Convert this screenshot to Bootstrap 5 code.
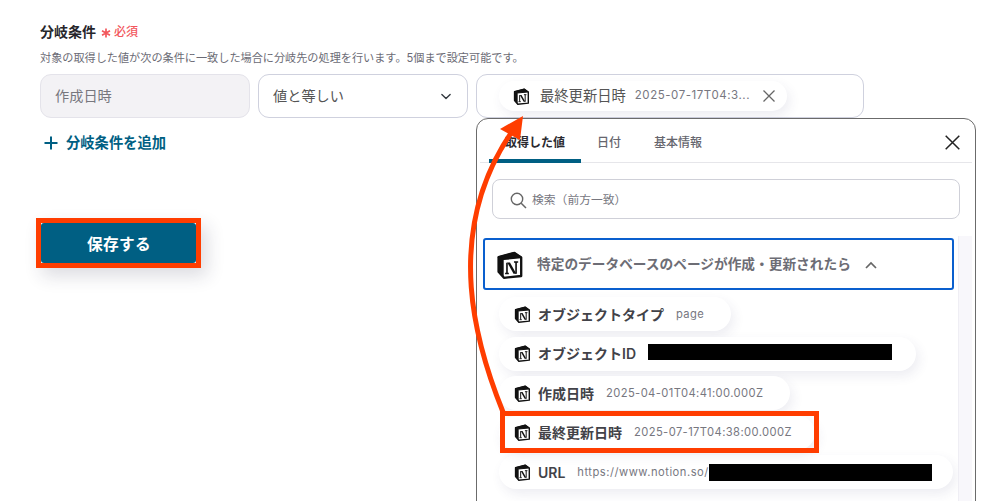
<!DOCTYPE html>
<html lang="ja">
<head>
<meta charset="utf-8">
<title>分岐条件</title>
<link href="https://cdn.jsdelivr.net/npm/bootstrap@5.3.0/dist/css/bootstrap.min.css" rel="stylesheet">
<style>
html,body{height:501px;overflow:hidden;background:#fff}
body{font-family:Inter,"Noto Sans CJK JP",sans-serif;color:#222;position:relative}
.page-wrap{padding:22px 0 0 40px}
.cond-label{font-size:14px;font-weight:700;line-height:20px;color:#26262b;margin:0}
.req{font-size:12px;font-weight:500;color:#f2575c}
.req-star{width:10px;height:10px;margin:1px 3px 0 5px;flex:none}
.cond-desc{font-size:11.15px;line-height:16px;color:#6b6b75;margin:8px 0 8px;white-space:nowrap}
.field{height:44px;border:1px solid #cfd1de;border-radius:11px;font-size:14.2px;color:#555;padding:0 14px;box-shadow:none}
.field-a{width:210px;background:#f3f2f5!important;border-color:#e4e3ea;color:#77777e}
.field-b{width:210px;background-position:right 14px center;background-size:14px 11px}
.field-c{width:388px;padding:0 0 0 22px;background:#fff}
.add-link{font-size:14.3px;font-weight:700;color:#005f83;margin:15px 0 0 4px;line-height:20px}
.save-frame{border:5px solid #ff3d00;width:165px;margin:65px 0 0 -4px;box-shadow:6px 8px 18px rgba(40,40,70,.16)}
.save-btn{display:block;width:155px;height:40px;background:#005f83;color:#fff;font-size:15.7px;font-weight:700;border:0;border-radius:3px;padding:3px 0 0 1px;letter-spacing:.3px}
.pill{height:34px;border-radius:17px;background:#fff;box-shadow:3px 5px 12px rgba(60,50,110,.09);padding:0 14px;font-size:14px;font-weight:600;color:#424248;white-space:nowrap}
.pill-val{font-size:11.2px;font-weight:400;color:#77777f;letter-spacing:.4px;margin-left:12px}
.chip-top{height:30px;width:288px;padding-left:14px;font-size:14.3px;font-weight:400;color:#555}
.chip-top .pill-val{font-size:11.5px;margin-left:9px;letter-spacing:.55px}
.chip-x{width:14px;height:14px;margin-left:12px;flex:none}
.n-ico{width:17px;height:17px;flex:none;margin-right:7px}
.chip-top .n-ico{margin-right:10px}
.picker{position:absolute;left:476px;top:118px;width:500px;height:420px;background:#fff;border:1px solid #6b6b6b;border-radius:12px}
.tab-row{margin:0 3px;height:44px;border-bottom:1px solid #e6e6ea;padding-left:9px;font-size:12px;font-weight:500;color:#66666e}
.tab-i{height:44px;line-height:47px;padding:0 17px 0 18px;position:relative;white-space:nowrap}
.tab-on{color:#2a2a30;font-weight:700;width:92px;padding:0;text-align:center;border-bottom:4px solid #005f83;border-radius:3px 3px 0 0;height:44px}
.tab-next{padding-left:16px;padding-right:33px}
.tab-last{padding-left:0}
.close-x{position:absolute;right:15px;top:16px;width:15px;height:15px}
.search-box{margin:16px 15px 0;height:40px;border:1px solid #cfd0d8;border-radius:8px;padding:3px 0 0 17px;font-size:11.8px;color:#77777f}
.search-ico{width:17px;height:17px;margin-right:5px}
.scroll-body{display:flex;margin-top:19px}
.tree{width:471px;margin-left:6px;flex:none}
.scroll-rail{width:14px;margin:-2px 0 0 4px;background:#f8f7fb;height:300px;border-left:1px solid #efeef4}
.acc-head{height:52px;border:2px solid #0a5fce;border-radius:3px;padding:1px 0 0 11px;font-size:13.7px;font-weight:600;color:#6d6d75;white-space:nowrap}
.acc-ico{width:28px;height:28px;flex:none;margin-right:13px}
.acc-chev{width:12px;height:8px;margin-left:14px}
.pill-list{padding:7px 0 0 16px;gap:5.5px}
.pill-list .n-ico{margin-right:7px}
.pill-list .pill{padding-left:15px}
.w1{width:232px}.w2{width:417px}.w3{width:291px}.w4{width:316px}.w5{width:454px}
.mask{display:inline-block;background:#000;flex:none}
.mask-a{width:244px;height:16px;margin:0 0 4px 12px}
.mask-b{width:223px;height:17px}
.url-val{margin-left:12px;letter-spacing:.5px}
.row-hi{position:relative}
.hi-box{position:absolute;left:1px;top:-5px;width:319px;height:42px;border:5px solid #ff3d00;pointer-events:none}
.arrow-layer{position:absolute;left:0;top:0;width:1003px;height:501px;pointer-events:none}
</style>
</head>
<body>
<svg width="0" height="0" class="position-absolute">
  <symbol id="notion" viewBox="0 0 24 24">
    <path d="M2.2 5.2 15.8 1.6 21.6 5.6V21.4L6.8 23 2.2 17.8Z" fill="#fff" stroke="#111" stroke-width="2" stroke-linejoin="round"/>
    <path d="M2.2 5.2 15.8 1.6 21.6 5.6 6.6 7Z" fill="#111" stroke="#111" stroke-width="1.4" stroke-linejoin="round"/>
    <path d="M2.2 5.2 6.6 7V23L2.2 17.8Z" fill="#111"/>
    <path d="M9.4 19V10" fill="none" stroke="#111" stroke-width="1.4"/>
    <path d="M17.2 19.4V9.4" fill="none" stroke="#111" stroke-width="1.4"/>
    <path d="M9.6 9.8H12L17.4 19.4H15Z" fill="#111"/>
    <path d="M7.8 19.3H11M15.4 9.4H19" fill="none" stroke="#111" stroke-width="1.3"/>
  </symbol>
</svg>

<main class="page-wrap">
  <div class="cond-label d-flex align-items-center">分岐条件<svg class="req-star" viewBox="0 0 10 10"><path d="M5 .5V9.5M1 2.7 9 7.3M9 2.7 1 7.3" stroke="#f2575c" stroke-width="1.7"/></svg><span class="req">必須</span></div>
  <p class="cond-desc">対象の取得した値が次の条件に一致した場合に分岐先の処理を行います。5個まで設定可能です。</p>
  <div class="d-flex gap-2">
    <div class="field field-a d-flex align-items-center">作成日時</div>
    <select class="form-select field field-b"><option>値と等しい</option></select>
    <div class="field field-c d-flex align-items-center">
      <div class="pill chip-top d-flex align-items-center">
        <svg class="n-ico"><use href="#notion"/></svg>
        <span>最終更新日時</span><span class="pill-val">2025-07-17T04:3...</span>
        <svg class="chip-x" viewBox="0 0 14 14"><path d="M1.5 1.5 12.5 12.5M12.5 1.5 1.5 12.5" stroke="#666" stroke-width="1.3"/></svg>
      </div>
    </div>
  </div>
  <div class="add-link d-flex align-items-center">
    <svg width="14" height="14" viewBox="0 0 14 14" class="me-2"><path d="M7 .5V13.5M.5 7H13.5" stroke="#005f83" stroke-width="2"/></svg>
    <span>分岐条件を追加</span>
  </div>
  <div class="save-frame"><button type="button" class="btn save-btn">保存する</button></div>
</main>

<section class="picker">
  <div class="tab-row d-flex">
    <div class="tab-i tab-on">取得した値</div>
    <div class="tab-i tab-next">日付</div>
    <div class="tab-i tab-last">基本情報</div>
  </div>
  <svg class="close-x" viewBox="0 0 15 15"><path d="M.7.7 14.3 14.3M14.3.7.7 14.3" stroke="#222" stroke-width="1.5"/></svg>
  <div class="search-box d-flex align-items-center">
    <svg class="search-ico" viewBox="0 0 17 17"><circle cx="7" cy="7" r="5.7" fill="none" stroke="#666" stroke-width="1.4"/><path d="M11.2 11.2 16 16" stroke="#666" stroke-width="1.5"/></svg>
    <span>検索（前方一致）</span>
  </div>
  <div class="scroll-body">
    <div class="tree">
      <div class="acc-head d-flex align-items-center">
        <svg class="acc-ico"><use href="#notion"/></svg>
        <span>特定のデータベースのページが作成・更新されたら</span>
        <svg class="acc-chev" viewBox="0 0 12 8"><path d="M1 7 6 2 11 7" fill="none" stroke="#666" stroke-width="1.7"/></svg>
      </div>
      <div class="pill-list d-flex flex-column">
        <div class="pill w1 d-flex align-items-center"><svg class="n-ico"><use href="#notion"/></svg><span>オブジェクトタイプ</span><span class="pill-val">page</span></div>
        <div class="pill w2 d-flex align-items-center"><svg class="n-ico"><use href="#notion"/></svg><span>オブジェクトID</span><span class="mask mask-a"></span></div>
        <div class="pill w3 d-flex align-items-center"><svg class="n-ico"><use href="#notion"/></svg><span>作成日時</span><span class="pill-val">2025-04-01T04:41:00.000Z</span></div>
        <div class="row-hi">
          <div class="pill w4 d-flex align-items-center"><svg class="n-ico"><use href="#notion"/></svg><span>最終更新日時</span><span class="pill-val">2025-07-17T04:38:00.000Z</span></div>
          <div class="hi-box"></div>
        </div>
        <div class="pill w5 d-flex align-items-center"><svg class="n-ico"><use href="#notion"/></svg><span>URL</span><span class="pill-val url-val">https://www.notion.so/</span><span class="mask mask-b"></span></div>
      </div>
    </div>
    <div class="scroll-rail"></div>
  </div>
</section>

<svg class="arrow-layer" viewBox="0 0 1003 501">
  <path d="M503 412C478 350 440 235 513 130" fill="none" stroke="#ff3d00" stroke-width="5"/>
  <path d="M523 116 500 129 520 140Z" fill="#ff3d00"/>
</svg>
<script src="https://cdn.jsdelivr.net/npm/bootstrap@5.3.0/dist/js/bootstrap.bundle.min.js"></script>
</body>
</html>
